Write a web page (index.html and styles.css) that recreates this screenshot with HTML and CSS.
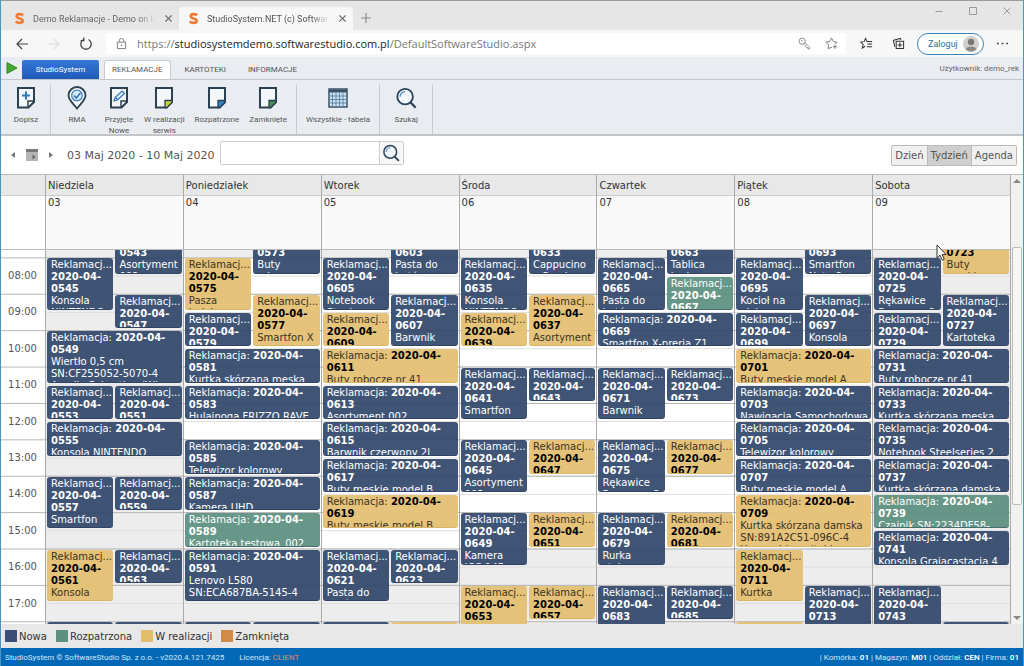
FILE: index.html
```html
<!DOCTYPE html>
<html lang="pl">
<head>
<meta charset="utf-8">
<title>StudioSystem.NET (c) SoftwareStudio</title>
<link rel="stylesheet" href="styles.css">
</head>
<body>
<svg class="defs" aria-hidden="true">
  <symbol id="logo" viewBox="0 0 12 14"><path d="M10 3.500C8.500 2 3 1.500 3 4.500S9.500 6.500 9.500 9.500 4 12 1.800 10.500" fill="none" stroke="#f07b35" stroke-width="3"/></symbol>
  <symbol id="page" viewBox="0 0 20 24"><path d="M2 2h16v14l-5.500 5.500H2z" fill="#f4f7fa" stroke="#2b4050" stroke-width="2"/><path d="M11 21.500v-7h7v2l-5 5z" fill="currentColor" stroke="#2b4050" stroke-width="1.300"/></symbol>
  <symbol id="lens" viewBox="0 0 24 24"><circle cx="11" cy="10.500" r="8.500" fill="#f2f7fb" stroke="#2b4358" stroke-width="2"/><path d="M17 17l5.500 5.500" stroke="#2b4358" stroke-width="2.400"/><path d="M5.500 10.500a5.500 5.500 0 0 1 5.500-5.500" fill="none" stroke="#3d80bd" stroke-width="1.300"/></symbol>
  <symbol id="cross" viewBox="0 0 10 10"><path d="M1.500 1.500l7 7M8.500 1.500l-7 7" stroke="currentColor" stroke-width="1.300"/></symbol>
</svg>

<header class="tabs-bar">
  <div class="tab"><svg class="logo"><use href="#logo"/></svg><span class="tab-title">Demo Reklamacje - Demo on line</span><button class="tab-close" aria-label="Zamknij kartę"><svg><use href="#cross"/></svg></button></div>
  <div class="tab tab-active"><svg class="logo"><use href="#logo"/></svg><span class="tab-title">StudioSystem.NET (c) SoftwareStudio</span><button class="tab-close" aria-label="Zamknij kartę"><svg><use href="#cross"/></svg></button></div>
  <button class="new-tab" aria-label="Nowa karta"><svg viewBox="0 0 12 12"><path d="M6 1v10M1 6h10" stroke="#8a8a8a" stroke-width="1.200"/></svg></button>
  <div class="window-buttons">
    <button aria-label="Minimalizuj"><svg viewBox="0 0 10 10"><path d="M1.500 5.500h7" stroke="#999"/></svg></button>
    <button aria-label="Maksymalizuj"><svg viewBox="0 0 10 10"><path d="M1.500 1.500h7v7h-7z" fill="none" stroke="#999"/></svg></button>
    <button aria-label="Zamknij"><svg viewBox="0 0 10 10"><path d="M1.500 1.500l7 7M8.500 1.500l-7 7" stroke="#999"/></svg></button>
  </div>
</header>

<nav class="address-bar">
  <button class="nav-btn" aria-label="Wstecz"><svg viewBox="0 0 14 14"><path d="M13 7H2M7 2L2 7l5 5" fill="none" stroke="#444" stroke-width="1.200"/></svg></button>
  <button class="nav-btn" aria-label="Dalej"><svg viewBox="0 0 14 14"><path d="M1 7h11M7 2l5 5-5 5" fill="none" stroke="#ddd" stroke-width="1.200"/></svg></button>
  <button class="nav-btn" aria-label="Odśwież"><svg viewBox="0 0 14 14"><path d="M4.500 2.500A5.200 5.200 0 1 0 9.500 2.500M4.800 .5v3.200H1.600" fill="none" stroke="#444" stroke-width="1.300"/></svg></button>
  <div class="url-box">
    <svg class="lock" viewBox="0 0 12 14"><path d="M1.500 5.500h9v7h-9zM3.500 5.500V4a2.500 2.500 0 0 1 5 0v1.500" fill="none" stroke="#777"/><circle cx="6" cy="9" r=".8" fill="#777"/></svg>
    <a class="url" href="#">https://<span>studiosystemdemo.softwarestudio.com.pl</span>/DefaultSoftwareStudio.aspx</a>
    <button aria-label="Hasła"><svg viewBox="0 0 14 14"><circle cx="4.500" cy="4.500" r="3.300" fill="none" stroke="#888"/><circle cx="4" cy="3.800" r=".8" fill="#888"/><path d="M7.200 6l5.300 5v1.700h-2v-1.400H9l-1-1.500-2-2" fill="none" stroke="#888"/></svg></button>
    <button aria-label="Dodaj do ulubionych"><svg viewBox="0 0 14 14"><path d="M7.500 11L3.300 12.500 4 8.500 1 5.500l4-.5L7 1l2 4 4 .5-2.200 2.200M8.500 10.500h4.500M10.700 8.300v4.500" fill="none" stroke="#777"/></svg></button>
  </div>
  <button class="bar-btn" aria-label="Ulubione"><svg viewBox="0 0 14 14"><path d="M5.500 10L2.500 12l.8-4L.8 5.500 4.500 5 6 1.500l1.500 3.300h5.500M8 7.500h5M7.300 10.500H13" fill="none" stroke="#333" stroke-width="1.100"/></svg></button>
  <button class="bar-btn" aria-label="Kolekcje"><svg viewBox="0 0 14 14"><path d="M4.500 4.500h8v8h-8zM3 10.500L1.500 3.500 9 1.500l.8 1.500M8.500 6v5M6 8.500h5" fill="none" stroke="#333" stroke-width="1.100"/></svg></button>
  <button class="login">Zaloguj <svg viewBox="0 0 16 16"><circle cx="8" cy="8" r="8" fill="#d2d0ce"/><circle cx="8" cy="6" r="3.200" fill="#7a7876"/><path d="M2.800 13.500c0-4 10.400-4 10.400 0a8 8 0 0 1-10.400 0z" fill="#8a8886"/></svg></button>
  <button class="bar-btn" aria-label="Więcej"><svg viewBox="0 0 14 14"><path d="M1 7h2M6 7h2M11 7h2" stroke="#444" stroke-width="1.600"/></svg></button>
</nav>

<nav class="ribbon-tabs">
  <svg class="play" viewBox="0 0 12 12"><path d="M1 .5L11 6 1 11.500z" fill="#43a832" stroke="#2f8a22"/></svg>
  <a class="app-tab" href="#">StudioSystem</a>
  <a class="rtab rtab-active" href="#">REKLAMACJE</a>
  <a class="rtab" href="#">KARTOTEKI</a>
  <a class="rtab" href="#">INFORMACJE</a>
  <span class="user">Użytkownik: demo_rek</span>
</nav>

<div class="ribbon">
  <div class="group">
    <button><svg viewBox="0 0 20 24"><path d="M2 2h16v14l-5.500 5.500H2z" fill="#f4f7fa" stroke="#2b4050" stroke-width="2"/><path d="M12 21v-6h6" fill="none" stroke="#2b4050" stroke-width="1.500"/><path d="M10 5.500v8M6 9.500h8" stroke="#2e77bd" stroke-width="2"/></svg>Dopisz</button>
  </div>
  <div class="group">
    <button><svg viewBox="0 0 20 24"><path d="M10 22.500C5 16.500 1.500 13.500 1.500 9.500a8.500 8.500 0 0 1 17 0c0 4-3.500 7-8.500 13z" fill="#f4f7fa" stroke="#2b4050" stroke-width="1.800"/><circle cx="10" cy="9.500" r="5.300" fill="#d8e9f6" stroke="#3d80bd" stroke-width="1.200"/><path d="M7 9.500l2.300 2.500L13.500 7" fill="none" stroke="#2e77bd" stroke-width="1.600"/></svg>RMA</button>
    <button class="narrow"><svg viewBox="0 0 20 24"><path d="M2 2h16v14l-5.500 5.500H2z" fill="#f4f7fa" stroke="#2b4050" stroke-width="2"/><path d="M12 21v-6h6" fill="none" stroke="#2b4050" stroke-width="1.500"/><path d="M5 15l1-3.500 7-6.500 2.500 2.500-7 6.500zM6.500 11.500L9 14" fill="#dcebf6" stroke="#2e77bd" stroke-width="1.200"/></svg>Przyjęte<br>Nowe</button>
    <button><svg class="in-progress"><use href="#page"/></svg>W realizacji<br>serwis</button>
    <button><svg class="reviewed"><use href="#page"/></svg>Rozpatrzone</button>
    <button><svg class="closed"><use href="#page"/></svg>Zamknięte</button>
  </div>
  <div class="group">
    <button><svg viewBox="0 0 20 24"><path d="M1 3h18v18H1z" fill="#cfe3f3" stroke="#3a5268" stroke-width="1.500"/><path d="M1 5h18" stroke="#3a5268" stroke-width="3"/><path d="M1 10h18M1 13.500h18M1 17h18M4.500 7v14M8 7v14M11.500 7v14M15 7v14" stroke="#5f87a8"/></svg>Wszystkie - tabela</button>
  </div>
  <div class="group">
    <button><svg><use href="#lens"/></svg>Szukaj</button>
  </div>
</div>

<div class="toolbar">
  <button class="step" aria-label="Poprzedni tydzień"><svg viewBox="0 0 6 8"><path d="M5 1v6L1 4z" fill="#777"/></svg></button>
  <button class="picker" aria-label="Wybierz datę"><svg viewBox="0 0 14 14"><path d="M1 1h12v12H1z" fill="#b5b5b5"/><path d="M1 1h12v3H1z" fill="#777"/><path d="M7.500 6.500l3 2.500-3 2.500z" fill="#666"/></svg></button>
  <button class="step" aria-label="Następny tydzień"><svg viewBox="0 0 6 8"><path d="M1 1v6l4-3z" fill="#777"/></svg></button>
  <span class="range">03 Maj 2020 - 10 Maj 2020</span>
  <form class="search"><input type="text" aria-label="Szukaj"><button type="button" aria-label="Szukaj"><svg><use href="#lens"/></svg></button></form>
  <div class="views"><button>Dzień</button><button class="on">Tydzień</button><button>Agenda</button></div>
</div>

<main class="schedule">
  <div class="calendar">
    <div class="row names">
      <div class="gutter"></div>
      <div>Niedziela</div><div>Poniedziałek</div><div>Wtorek</div><div>Środa</div><div>Czwartek</div><div>Piątek</div><div>Sobota</div>
    </div>
    <div class="row dates">
      <div class="gutter"></div>
      <div>03</div><div>04</div><div>05</div><div>06</div><div>07</div><div>08</div><div>09</div>
    </div>
    <div class="viewport">
      <div class="row hours">
        <div class="gutter times">
          <span></span><span>08:00</span><span>09:00</span><span>10:00</span><span>11:00</span><span>12:00</span><span>13:00</span><span>14:00</span><span>15:00</span><span>16:00</span><span>17:00</span>
        </div>

        <section class="day free">
          <article class="ev" style="grid-area:1/2/span 3"><i>Reklamacj...</i> <b>2020-04-0543</b> <p>Asortyment 002</p></article>
          <article class="ev" style="grid-area:3/1/span 3"><i>Reklamacj...</i> <b>2020-04-0545</b> <p>Konsola NINTENDO</p></article>
          <article class="ev" style="grid-area:5/2/span 2"><i>Reklamacj...</i> <b>2020-04-0547</b></article>
          <article class="ev wide" style="grid-row:7/span 3"><i>Reklamacja:</i> <b>2020-04-0549</b> <p>Wiertło 0,5 cm SN:CF255052-5070-4 Amelia Sebastian (Wlo</p></article>
          <article class="ev" style="grid-area:10/1/span 2"><i>Reklamacj...</i> <b>2020-04-0553</b></article>
          <article class="ev" style="grid-area:10/2/span 2"><i>Reklamacj...</i> <b>2020-04-0551</b></article>
          <article class="ev wide" style="grid-row:12/span 2"><i>Reklamacja:</i> <b>2020-04-0555</b> <p>Konsola NINTENDO</p></article>
          <article class="ev" style="grid-area:15/1/span 3"><i>Reklamacj...</i> <b>2020-04-0557</b> <p>Smartfon Xperia Z1</p></article>
          <article class="ev" style="grid-area:15/2/span 2"><i>Reklamacj...</i> <b>2020-04-0559</b></article>
          <article class="ev work" style="grid-area:19/1/span 3"><i>Reklamacj...</i> <b>2020-04-0561</b> <p>Konsola Grajacast</p></article>
          <article class="ev" style="grid-area:19/2/span 2"><i>Reklamacj...</i> <b>2020-04-0563</b></article>
          <article class="ev" style="grid-area:23/1/span 2"></article>
          <article class="ev" style="grid-area:23/2/span 2"></article>
        </section>

        <section class="day">
          <article class="ev" style="grid-area:1/2/span 3"><i>Reklamacj...</i> <b>2020-04-0573</b> <p>Buty robocze</p></article>
          <article class="ev work" style="grid-area:3/1/span 3"><i>Reklamacj...</i> <b>2020-04-0575</b> <p>Pasza indyk SN:0F75A</p></article>
          <article class="ev work" style="grid-area:5/2/span 3"><i>Reklamacj...</i> <b>2020-04-0577</b> <p>Smartfon X SN:BC50A</p></article>
          <article class="ev" style="grid-area:6/1/span 2"><i>Reklamacj...</i> <b>2020-04-0579</b></article>
          <article class="ev wide" style="grid-row:8/span 2"><i>Reklamacja:</i> <b>2020-04-0581</b> <p>Kurtka skórzana męska</p></article>
          <article class="ev wide" style="grid-row:10/span 2"><i>Reklamacja:</i> <b>2020-04-0583</b> <p>Hulajnoga FRIZZO RAVE</p></article>
          <article class="ev wide" style="grid-row:13/span 2"><i>Reklamacja:</i> <b>2020-04-0585</b> <p>Telewizor kolorowy</p></article>
          <article class="ev wide" style="grid-row:15/span 2"><i>Reklamacja:</i> <b>2020-04-0587</b> <p>Kamera UHD</p></article>
          <article class="ev wide done" style="grid-row:17/span 2"><i>Reklamacja:</i> <b>2020-04-0589</b> <p>Kartoteka testowa_002</p></article>
          <article class="ev wide" style="grid-row:19/span 3"><i>Reklamacja:</i> <b>2020-04-0591</b> <p>Lenovo L580 SN:ECA687BA-5145-4 Adamski Notes (Mod</p></article>
          <article class="ev" style="grid-area:23/1/span 2"></article>
          <article class="ev" style="grid-area:23/2/span 2"></article>
        </section>

        <section class="day">
          <article class="ev" style="grid-area:1/2/span 3"><i>Reklamacj...</i> <b>2020-04-0603</b> <p>Pasta do butów</p></article>
          <article class="ev" style="grid-area:3/1/span 3"><i>Reklamacj...</i> <b>2020-04-0605</b> <p>Notebook Steelser</p></article>
          <article class="ev" style="grid-area:5/2/span 3"><i>Reklamacj...</i> <b>2020-04-0607</b> <p>Barwnik czerwony 2l</p></article>
          <article class="ev work" style="grid-area:6/1/span 2"><i>Reklamacj...</i> <b>2020-04-0609</b></article>
          <article class="ev wide work" style="grid-row:8/span 2"><i>Reklamacja:</i> <b>2020-04-0611</b> <p>Buty robocze nr 41</p></article>
          <article class="ev wide" style="grid-row:10/span 2"><i>Reklamacja:</i> <b>2020-04-0613</b> <p>Asortyment 002</p></article>
          <article class="ev wide" style="grid-row:12/span 2"><i>Reklamacja:</i> <b>2020-04-0615</b> <p>Barwnik czerwony 2l</p></article>
          <article class="ev wide" style="grid-row:14/span 2"><i>Reklamacja:</i> <b>2020-04-0617</b> <p>Buty męskie model B</p></article>
          <article class="ev wide work" style="grid-row:16/span 2"><i>Reklamacja:</i> <b>2020-04-0619</b> <p>Buty męskie model B</p></article>
          <article class="ev" style="grid-area:19/1/span 3"><i>Reklamacj...</i> <b>2020-04-0621</b> <p>Pasta do butów</p></article>
          <article class="ev" style="grid-area:19/2/span 2"><i>Reklamacj...</i> <b>2020-04-0623</b></article>
          <article class="ev" style="grid-area:23/1/span 2"></article>
          <article class="ev work" style="grid-area:23/2/span 2"></article>
        </section>

        <section class="day">
          <article class="ev" style="grid-area:1/2/span 3"><i>Reklamacj...</i> <b>2020-04-0633</b> <p>Cappucino z Coral</p></article>
          <article class="ev" style="grid-area:3/1/span 3"><i>Reklamacj...</i> <b>2020-04-0635</b> <p>Konsola NINTENDO</p></article>
          <article class="ev work" style="grid-area:5/2/span 3"><i>Reklamacj...</i> <b>2020-04-0637</b> <p>Asortyment 001</p></article>
          <article class="ev work" style="grid-area:6/1/span 2"><i>Reklamacj...</i> <b>2020-04-0639</b></article>
          <article class="ev" style="grid-area:9/1/span 3"><i>Reklamacj...</i> <b>2020-04-0641</b> <p>Smartfon Galaxy S1</p></article>
          <article class="ev" style="grid-area:9/2/span 2"><i>Reklamacj...</i> <b>2020-04-0643</b></article>
          <article class="ev" style="grid-area:13/1/span 3"><i>Reklamacj...</i> <b>2020-04-0645</b> <p>Asortyment 003</p></article>
          <article class="ev work" style="grid-area:13/2/span 2"><i>Reklamacj...</i> <b>2020-04-0647</b></article>
          <article class="ev" style="grid-area:17/1/span 3"><i>Reklamacj...</i> <b>2020-04-0649</b> <p>Kamera ICC-145</p></article>
          <article class="ev work" style="grid-area:17/2/span 2"><i>Reklamacj...</i> <b>2020-04-0651</b></article>
          <article class="ev work" style="grid-area:21/1/span 3"><i>Reklamacj...</i> <b>2020-04-0653</b></article>
          <article class="ev work" style="grid-area:21/2/span 2"><i>Reklamacj...</i> <b>2020-04-0657</b></article>
        </section>

        <section class="day">
          <article class="ev" style="grid-area:1/2/span 3"><i>Reklamacj...</i> <b>2020-04-0663</b> <p>Tablica korkowa</p></article>
          <article class="ev" style="grid-area:3/1/span 3"><i>Reklamacj...</i> <b>2020-04-0665</b> <p>Pasta do butów</p></article>
          <article class="ev done" style="grid-area:4/2/span 2"><i>Reklamacj...</i> <b>2020-04-0667</b></article>
          <article class="ev wide" style="grid-row:6/span 2"><i>Reklamacja:</i> <b>2020-04-0669</b> <p>Smartfon X-preria Z1</p></article>
          <article class="ev" style="grid-area:9/1/span 3"><i>Reklamacj...</i> <b>2020-04-0671</b> <p>Barwnik czerwony 5l</p></article>
          <article class="ev" style="grid-area:9/2/span 2"><i>Reklamacj...</i> <b>2020-04-0673</b></article>
          <article class="ev" style="grid-area:13/1/span 3"><i>Reklamacj...</i> <b>2020-04-0675</b> <p>Rękawice Bramowe 8</p></article>
          <article class="ev work" style="grid-area:13/2/span 2"><i>Reklamacj...</i> <b>2020-04-0677</b></article>
          <article class="ev" style="grid-area:17/1/span 3"><i>Reklamacj...</i> <b>2020-04-0679</b> <p>Rurka stalowa</p></article>
          <article class="ev work" style="grid-area:17/2/span 2"><i>Reklamacj...</i> <b>2020-04-0681</b></article>
          <article class="ev" style="grid-area:21/1/span 3"><i>Reklamacj...</i> <b>2020-04-0683</b></article>
          <article class="ev" style="grid-area:21/2/span 2"><i>Reklamacj...</i> <b>2020-04-0685</b></article>
        </section>

        <section class="day">
          <article class="ev" style="grid-area:1/2/span 3"><i>Reklamacj...</i> <b>2020-04-0693</b> <p>Smartfon Note 8</p></article>
          <article class="ev" style="grid-area:3/1/span 3"><i>Reklamacj...</i> <b>2020-04-0695</b> <p>Kocioł na olej</p></article>
          <article class="ev" style="grid-area:5/2/span 3"><i>Reklamacj...</i> <b>2020-04-0697</b> <p>Konsola Grajacast</p></article>
          <article class="ev" style="grid-area:6/1/span 2"><i>Reklamacj...</i> <b>2020-04-0699</b></article>
          <article class="ev wide work" style="grid-row:8/span 2"><i>Reklamacja:</i> <b>2020-04-0701</b> <p>Buty męskie model A</p></article>
          <article class="ev wide" style="grid-row:10/span 2"><i>Reklamacja:</i> <b>2020-04-0703</b> <p class="line">Nawigacja Samochodowa</p></article>
          <article class="ev wide" style="grid-row:12/span 2"><i>Reklamacja:</i> <b>2020-04-0705</b> <p>Telewizor kolorowy</p></article>
          <article class="ev wide" style="grid-row:14/span 2"><i>Reklamacja:</i> <b>2020-04-0707</b> <p>Buty męskie model A</p></article>
          <article class="ev wide work" style="grid-row:16/span 3"><i>Reklamacja:</i> <b>2020-04-0709</b> <p>Kurtka skórzana damska SN:891A2C51-096C-4 Uszczerbiony (tabl</p></article>
          <article class="ev work" style="grid-area:19/1/span 3"><i>Reklamacj...</i> <b>2020-04-0711</b> <p>Kurtka skórzana</p></article>
          <article class="ev" style="grid-area:21/2/span 3"><i>Reklamacj...</i> <b>2020-04-0713</b></article>
          <article class="ev work" style="grid-area:23/1/span 2"></article>
        </section>

        <section class="day free">
          <article class="ev work" style="grid-area:1/2/span 3"><i>Reklamacj...</i> <b>2020-04-0723</b> <p>Buty męskie</p></article>
          <article class="ev" style="grid-area:3/1/span 3"><i>Reklamacj...</i> <b>2020-04-0725</b> <p>Rękawice Bramowe 8</p></article>
          <article class="ev" style="grid-area:5/2/span 3"><i>Reklamacj...</i> <b>2020-04-0727</b> <p>Kartoteka testowa_0</p></article>
          <article class="ev" style="grid-area:6/1/span 2"><i>Reklamacj...</i> <b>2020-04-0729</b></article>
          <article class="ev wide" style="grid-row:8/span 2"><i>Reklamacja:</i> <b>2020-04-0731</b> <p>Buty robocze nr 41</p></article>
          <article class="ev wide" style="grid-row:10/span 2"><i>Reklamacja:</i> <b>2020-04-0733</b> <p>Kurtka skórzana męska</p></article>
          <article class="ev wide" style="grid-row:12/span 2"><i>Reklamacja:</i> <b>2020-04-0735</b> <p>Notebook Steelseries 2</p></article>
          <article class="ev wide" style="grid-row:14/span 2"><i>Reklamacja:</i> <b>2020-04-0737</b> <p>Kurtka skórzana damska</p></article>
          <article class="ev wide done" style="grid-row:16/span 2"><i>Reklamacja:</i> <b>2020-04-0739</b> <p>Czajnik SN:2234DF58-</p></article>
          <article class="ev wide" style="grid-row:18/span 2"><i>Reklamacja:</i> <b>2020-04-0741</b> <p class="line">Konsola Grajacastacja 4</p></article>
          <article class="ev" style="grid-area:21/1/span 3"><i>Reklamacj...</i> <b>2020-04-0743</b></article>
          <article class="ev" style="grid-area:23/2/span 2"></article>
        </section>
      </div>
    </div>
    <svg class="pointer" viewBox="0 0 12 18"><path d="M1 1v13l3-2.800 2.300 5 2-1-2.200-4.700h4z" fill="#fff" stroke="#333"/></svg>
  </div>
  <div class="scrollbar">
    <svg viewBox="0 0 8 6"><path d="M0 5l4-4 4 4z" fill="#888"/></svg>
    <div class="track"><div class="thumb"></div></div>
    <svg viewBox="0 0 8 6"><path d="M0 1l4 4 4-4z" fill="#888"/></svg>
  </div>
</main>

<ul class="legend">
  <li class="k-new">Nowa</li><li class="k-done">Rozpatrzona</li><li class="k-work">W realizacji</li><li class="k-closed">Zamknięta</li>
</ul>

<footer class="status">
  <span>StudioSystem © SoftwareStudio Sp. z o.o. - v2020.4.121.7425</span>
  <span class="licence">Licencja: <em>CLIENT</em></span>
  <span class="place">| Komórka: <strong>01</strong> | Magazyn: <strong>M01</strong> | Oddział: <strong>CEN</strong> | Firma: <strong>01</strong></span>
</footer>
</body>
</html>
```
FILE: styles.css
```css
* { box-sizing: border-box; }
body {
  margin: 0;
  height: 100vh;
  display: flex;
  flex-direction: column;
  overflow: hidden;
  border: solid #4a95c4;
  border-width: 0 1px;
  background: #fff;
  color: #444;
  font: 10px "DejaVu Sans", Verdana, sans-serif;
}
button { margin: 0; padding: 0; border: 0; background: none; color: inherit; font: inherit; }
a { color: inherit; text-decoration: none; }
svg { display: block; flex: none; }
.defs { position: absolute; width: 0; height: 0; }

/* Browser frame */
.tabs-bar, .address-bar, .ribbon-tabs, .ribbon, .status { flex: none; font-family: Roboto, "Open Sans", sans-serif; }
.tabs-bar { display: flex; align-items: flex-end; height: 30px; background: #e6e6e6; border-top: 1px solid #9b9b9b; }
.tab { display: flex; align-items: center; width: 174px; height: 23px; padding: 0 6px 0 9px; gap: 8px; color: #666; font-size: 9px; }
.tab:first-child { width: 178px; padding-left: 13px; }
.tab-active { background: #f7f7f7; border-radius: 4px 4px 0 0; color: #555; }
.logo { width: 11px; height: 13px; }
.tab-title { flex: 1; overflow: hidden; white-space: nowrap; -webkit-mask-image: linear-gradient(90deg, #000 85%, transparent); mask-image: linear-gradient(90deg, #000 85%, transparent); }
.tab-close svg { width: 9px; height: 9px; color: #666; }
.new-tab { padding: 0 7px 6px; }
.new-tab svg { width: 12px; height: 12px; }
.window-buttons { display: flex; gap: 24px; margin-left: auto; padding: 0 11px 14px; }
.window-buttons svg { width: 10px; height: 10px; }

.address-bar { display: flex; align-items: center; height: 27px; padding: 0 14px; background: #f7f7f7; }
.nav-btn { margin-right: 18px; }
.nav-btn svg { width: 14px; height: 14px; }
.url-box { flex: 1; display: flex; align-items: center; gap: 14px; height: 21px; margin-left: -5px; margin-right: 14px; padding: 0 8px 0 10px; background: #fff; border-radius: 2px; }
.url-box .lock { width: 11px; height: 13px; }
.url-box button svg { width: 13px; height: 13px; }
.url { flex: 1; margin-left: -4px; color: #777; font-family: "Open Sans", sans-serif; font-size: 11px; white-space: nowrap; }
.url span { color: #222; }
.bar-btn svg { width: 13px; height: 13px; }
.bar-btn + .bar-btn { margin-left: 19px; }
.login { display: flex; align-items: center; justify-content: space-between; width: 67px; height: 22px; margin: 0 12px; padding: 0 4px 0 10px; border: 1px solid #3b84b8; border-radius: 11px; background: #fff; color: #2b6fa8; font-size: 9px; }
.login svg { width: 16px; height: 16px; }

/* Ribbon */
.ribbon-tabs { display: flex; align-items: flex-end; height: 23px; padding-left: 5px; background: #e9ecf1; border-bottom: 1px solid #c3c7cd; color: #555; font-size: 8px; }
.play { width: 12px; height: 12px; margin-bottom: 5px; }
.app-tab { width: 77px; margin-left: 4px; background: #2766c4; background-image: linear-gradient(#3577d6, #1f5ab8); color: #fff; text-align: center; line-height: 19px; border-radius: 2px 2px 0 0; }
.rtab { padding: 0 7px; margin-right: 6px; line-height: 18px; border: 1px solid transparent; border-bottom: 0; }
.rtab-active { margin-left: 5px; background: #fff; border-color: #c8ccd2; border-radius: 3px 3px 0 0; }
.user { margin-left: auto; padding-right: 4px; line-height: 21px; color: #666; }
.ribbon { display: flex; height: 56px; padding-top: 4px; background: #e9ecf1; border-bottom: 2px solid #c3c5c9; color: #555; font-size: 8px; line-height: 11px; }
.group { display: flex; align-items: flex-start; padding: 0 4px; border-right: 1px solid #c8ccd1; }
.group:first-child { padding: 0 2px 0 3px; }
.group button { display: flex; flex-direction: column; align-items: center; min-width: 44px; padding: 2px 5px 0; }
.group .narrow { min-width: 40px; }
.group svg { width: 22px; height: 24px; margin-bottom: 4px; }
.in-progress { color: #c6d42f; }
.reviewed { color: #2f80c4; }
.closed { color: #3f9150; }

/* Calendar toolbar */
.toolbar { flex: none; display: flex; align-items: center; height: 38px; padding: 0 6px 0 9px; font-size: 10px; color: #555; }
.step svg { width: 6px; height: 8px; }
.picker { margin: 0 9px; }
.picker svg { width: 14px; height: 14px; }
.range { margin: 0 5px 0 13px; font-size: 11px; white-space: nowrap; }
.search { display: flex; height: 24px; margin-bottom: 4px; border: 1px solid #ccc; border-radius: 2px; }
.search input { width: 158px; padding: 0 4px; border: 0; outline: 0; font: inherit; }
.search button { width: 24px; border-left: 1px solid #ccc; background: #f7f7f7; }
.search svg { width: 18px; height: 18px; margin: 0 auto; }
.views { display: flex; height: 21px; margin-left: auto; border: 1px solid #bbb; border-radius: 2px; background: #f0f0f0; }
.views button { padding: 0 3px; }
.views .on { background: #cfcfcf; border: solid #bbb; border-width: 0 1px; }

/* Week schedule */
.schedule { flex: 1; display: flex; min-height: 0; border-top: 1px solid #bbb; }
.calendar { position: relative; flex: 1; min-width: 0; display: flex; flex-direction: column; }
.row { display: grid; grid-template-columns: 44px repeat(7, minmax(0, 1fr)); border-right: 1px solid #aaa; }
.row > :not(.gutter) { border-left: 1px solid #aaa; }
.names { height: 21px; background: #e8e8e8; border-bottom: 1px solid #ccc; line-height: 21px; color: #333; }
.dates { height: 54px; background: #f9f9f9; border-bottom: 1px solid #bbb; line-height: 14px; color: #333; }
.names > div, .dates > div { padding-left: 2px; }
.dates .gutter { background: #fff; }
.viewport { flex: 1; min-height: 0; overflow: hidden; }
.hours { grid-template-rows: minmax(0, 1fr); height: 455px; margin-top: -29px; }
.times, .day { display: grid; min-height: 0; grid-template-rows: repeat(25, minmax(0, 1fr)); }
.times { background: linear-gradient(#b5b5b5 1px, transparent 1px) 0 0 / 100% 8%; color: #555; text-align: center; }
.times span { grid-row-end: span 2; align-self: center; padding-right: 1px; }
.day {
  grid-template-columns: repeat(2, minmax(0, 1fr));
  background:
    linear-gradient(#b5b5b5 1px, transparent 1px) 0 0 / 100% 8%,
    linear-gradient(#dedede 1px, transparent 1px) 0 0 / 100% 4%,
    linear-gradient(#ededed 8%, #fff 8%, #fff 72%, #ededed 72%);
}
.free {
  background:
    linear-gradient(#b5b5b5 1px, transparent 1px) 0 0 / 100% 8%,
    linear-gradient(#dedede 1px, transparent 1px) 0 0 / 100% 4%,
    #ededed;
}
.ev {
  min-height: 0;
  margin: 1px 1px 2px;
  padding: 1px 4px 0;
  overflow: hidden;
  border-radius: 3px;
  border-bottom: 1px solid rgba(20, 35, 70, .35);
  background: rgba(50, 72, 108, .93);
  color: #fff;
  line-height: 12px;
}
.ev i { font-style: normal; white-space: nowrap; }
.ev p { margin: 0; }
.ev .line { white-space: nowrap; }
.wide { grid-column: 1 / -1; }
.work { background: rgba(228, 192, 115, .95); border-bottom-color: #d9b566; color: #3a3222; }
.work b { color: #000; }
.done { background: rgba(91, 143, 127, .93); }
.pointer { position: absolute; right: 63px; top: 69px; width: 12px; height: 18px; }
.scrollbar { width: 12px; display: flex; flex-direction: column; align-items: center; padding: 3px 0; background: #f1f1f1; }
.scrollbar svg { width: 8px; height: 6px; }
.track { flex: 1; align-self: stretch; padding: 63px 1px 0; }
.thumb { height: 70%; border: 1px solid #bbb; border-radius: 2px; background: #f6f6f6; }

/* Legend and status line */
.legend { flex: none; display: flex; align-items: center; gap: 9px; height: 24px; margin: 0; padding: 0 4px; list-style: none; background: #e8e8e8; color: #333; }
.legend li { display: flex; align-items: center; gap: 2px; }
.legend li::before { content: ""; width: 12px; height: 12px; background: currentColor; }
.legend .k-new::before { background: #3c5075; }
.legend .k-done::before { background: #5b917e; }
.legend .k-work::before { background: #e2bd6d; }
.legend .k-closed::before { background: #d18a47; }
.status { display: flex; align-items: center; height: 18px; padding: 0 4px; background: #0368b5; color: #d4e8f7; font-size: 8px; }
.licence { margin-left: 15px; }
.licence em { font-style: normal; color: #e8896a; }
.place { margin-left: auto; }
.place strong { font-weight: 600; color: #fff; }
```
